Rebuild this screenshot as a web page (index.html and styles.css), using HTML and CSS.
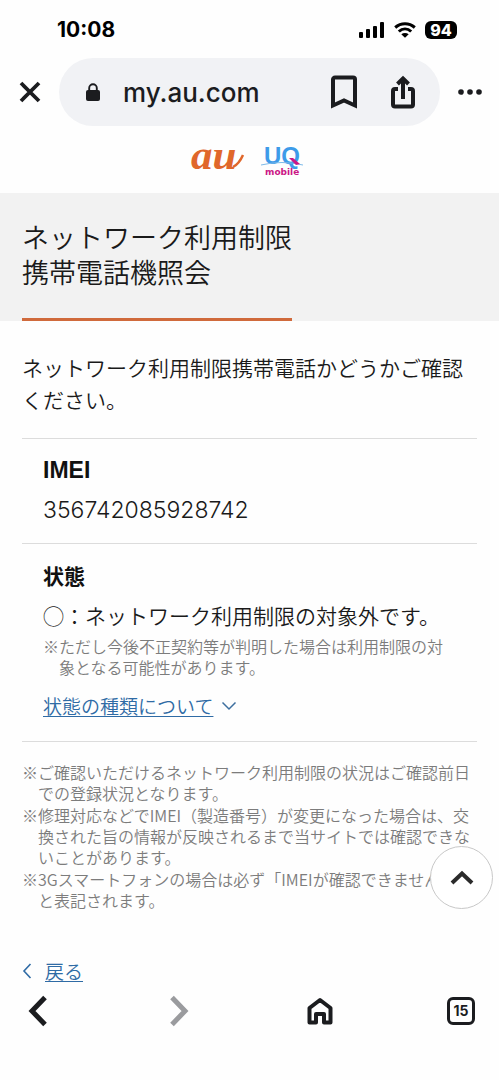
FILE: index.html
```html
<!DOCTYPE html>
<html lang="ja">
<head>
<meta charset="utf-8">
<meta name="viewport" content="width=device-width, initial-scale=1">
<title>ネットワーク利用制限携帯電話機照会</title>
<link rel="stylesheet" href="styles.css">
</head>
<body>
<div class="status-bar">
  <time class="clock">10:08</time>
  <div class="indicators">
    <svg class="signal" viewBox="0 0 26 16" width="26" height="16" aria-hidden="true">
      <rect x="0" y="10" width="4" height="6" rx="1"/><rect x="7" y="7" width="4" height="9" rx="1"/><rect x="14" y="4" width="4" height="12" rx="1"/><rect x="21" y="0" width="4" height="16" rx="1"/>
    </svg>
    <svg class="wifi" viewBox="0 0 22 16" width="22" height="16" aria-hidden="true">
      <path d="M1.200 5.500C7 0.400 15 0.400 20.800 5.500M4.800 9.500C8.500 6 13.500 6 17.200 9.500" fill="none" stroke="#000" stroke-width="3"/>
      <path d="M11 15.800L7.300 12.300C9.500 10.500 12.500 10.500 14.700 12.300Z"/>
    </svg>
    <span class="battery">94</span>
  </div>
</div>
<header class="browser-bar">
  <button class="icon-button" type="button" aria-label="閉じる">
    <svg viewBox="0 0 22 22" width="22" height="22"><path d="M2 2L20 20M20 2L2 20" fill="none" stroke="#1b1c1f" stroke-width="3.800"/></svg>
  </button>
  <div class="omnibox">
    <svg viewBox="0 0 16 18" width="16" height="18" aria-hidden="true">
      <rect x="1" y="7" width="14" height="11" rx="2" fill="#1b1c1f"/><path d="M4.200 8V5a3.800 3.800 0 0 1 7.600 0v3" fill="none" stroke="#1b1c1f" stroke-width="1.900"/>
    </svg>
    <input class="address" type="text" value="my.au.com" aria-label="アドレス">
    <button class="omnibox-button" type="button" aria-label="ブックマーク">
      <svg viewBox="0 0 28 34" width="28" height="34"><path d="M3 30.500V4.500a2 2 0 0 1 2-2h18a2 2 0 0 1 2 2v26L14 25.500Z" fill="none" stroke="#1b1c1f" stroke-width="4"/></svg>
    </button>
    <button class="omnibox-button" type="button" aria-label="共有">
      <svg viewBox="0 0 26 34" width="26" height="34" fill="none" stroke="#1b1c1f" stroke-width="4"><path d="M8 14H5a2 2 0 0 0-2 2v13.500a2 2 0 0 0 2 2h16a2 2 0 0 0 2-2V16a2 2 0 0 0-2-2H18M13 24V4M7.500 9L13 3.500L18.500 9"/></svg>
    </button>
  </div>
  <button class="icon-button" type="button" aria-label="メニュー">
    <svg viewBox="0 0 24 6" width="24" height="6" fill="#1b1c1f"><circle cx="3" cy="3" r="2.800"/><circle cx="12" cy="3" r="2.800"/><circle cx="21" cy="3" r="2.800"/></svg>
  </button>
</header>
<main class="page">
  <div class="brands">
    <svg viewBox="0 0 56 56" width="56" height="56" role="img" aria-label="au">
      <text class="logo-au" x="1" y="37">au</text>
      <path d="M43 35Q49 32 53 23" fill="none" stroke="#e0672b" stroke-width="2.500"/>
    </svg>
    <svg viewBox="0 0 44 56" width="44" height="56" role="img" aria-label="UQ mobile">
      <text class="logo-uq" x="4" y="32">UQ</text>
      <path d="M1 33Q22 28 43 33" fill="none" stroke="#7fbbe9" stroke-width="1"/>
      <path d="M29 26L33 26L40 32L36 33Z" fill="#cb1886"/>
      <text class="logo-mobile" x="5" y="43">mobile</text>
    </svg>
  </div>
  <div class="title-band">
    <h1 class="title">ネットワーク利用制限<br>携帯電話機照会</h1>
  </div>
  <div class="content">
    <p class="lead">ネットワーク利用制限携帯電話かどうかご確認ください。</p>
    <dl class="result">
      <div class="result-row">
        <dt class="imei-label">IMEI</dt>
        <dd class="imei">356742085928742</dd>
      </div>
      <div class="result-row">
        <dt>状態</dt>
        <dd>◯：ネットワーク利用制限の対象外です。</dd>
        <dd class="note">※ただし今後不正契約等が判明した場合は利用制限の対象となる可能性があります。</dd>
        <dd class="more"><a class="link" href="#types">状態の種類について</a>
          <svg viewBox="0 0 16 10" width="16" height="10" aria-hidden="true"><path d="M1.500 1.500L8 8L14.500 1.500" fill="none" stroke="#3d6f9f" stroke-width="1.500"/></svg>
        </dd>
      </div>
    </dl>
    <ul class="notes">
      <li class="note">※ご確認いただけるネットワーク利用制限の状況はご確認前日での登録状況となります。</li>
      <li class="note">※修理対応などでIMEI（製造番号）が変更になった場合は、交換された旨の情報が反映されるまで当サイトでは確認できないことがあります。</li>
      <li class="note">※3Gスマートフォンの場合は必ず「IMEIが確認できません」と表記されます。</li>
    </ul>
    <div class="back">
      <svg viewBox="0 0 10 16" width="10" height="16" aria-hidden="true"><path d="M8.500 1L2 8L8.500 15" fill="none" stroke="#2f6ba5" stroke-width="1.600"/></svg>
      <a class="link" href="#back">戻る</a>
    </div>
  </div>
  <button class="to-top" type="button" aria-label="ページの先頭へ">
    <svg viewBox="0 0 24 16" width="24" height="16"><path d="M2 13L12 3.500L22 13" fill="none" stroke="#2b2b2b" stroke-width="4"/></svg>
  </button>
</main>
<nav class="toolbar">
  <button class="tool" type="button" aria-label="前のページ">
    <svg viewBox="0 0 20 32" width="20" height="32"><path d="M17 2.500L4 16L17 29.500" fill="none" stroke="#1b1c1f" stroke-width="5"/></svg>
  </button>
  <button class="tool" type="button" aria-label="次のページ">
    <svg viewBox="0 0 20 32" width="20" height="32"><path d="M3 2.500L16 16L3 29.500" fill="none" stroke="#9a9b9e" stroke-width="5"/></svg>
  </button>
  <button class="tool" type="button" aria-label="ホーム">
    <svg viewBox="0 0 26 28" width="26" height="28"><path d="M2.500 11L13 3L23.500 11V25.500H17V17H9V25.500H2.500Z" fill="none" stroke="#1b1c1f" stroke-width="4" stroke-linejoin="round"/></svg>
  </button>
  <button class="tool" type="button" aria-label="タブ 15">
    <span class="tab-count">15</span>
  </button>
</nav>
</body>
</html>
```
FILE: styles.css
```css
* { box-sizing: border-box; }

body {
  margin: 0;
  min-height: 100vh;
  display: flex;
  flex-direction: column;
  background: #fefefe;
  color: #1a1a1a;
  font-family: "Noto Sans CJK JP", sans-serif;
  font-size: 21px;
  font-weight: 350;
  line-height: 32px;
}

button {
  display: flex;
  align-items: center;
  justify-content: center;
  padding: 0;
  border: 0;
  background: none;
}

svg { display: block; flex: none; }

.status-bar {
  display: flex;
  justify-content: space-between;
  align-items: center;
  padding: 14px 42px 12px 57px;
  color: #000;
  font-family: Inter, sans-serif;
}

.clock { font-size: 21px; font-weight: 700; }

.indicators { display: flex; align-items: center; gap: 9px; }

.battery {
  width: 32px;
  border-radius: 6px;
  background: #000;
  color: #fff;
  font-size: 16px;
  font-weight: 800;
  line-height: 18px;
  text-align: center;
}

.browser-bar { display: flex; align-items: center; }

.icon-button { width: 59px; height: 68px; }

.omnibox {
  flex: 1;
  min-width: 0;
  display: flex;
  align-items: center;
  height: 68px;
  padding: 0 24px 0 26px;
  border-radius: 34px;
  background: #f1f2f5;
}

.address {
  flex: 1;
  min-width: 0;
  padding: 0 0 0 22px;
  border: 0;
  background: none;
  color: #1b1c1f;
  font-family: Inter, sans-serif;
  font-size: 26px;
  font-weight: 500;
}

.omnibox-button + .omnibox-button { margin-left: 32px; }

.page { position: relative; flex: 1; }

.brands {
  display: flex;
  justify-content: center;
  gap: 14px;
  padding: 6px 6px 5px 0;
}

.logo-au {
  fill: #e0672b;
  font-family: "Liberation Serif", serif;
  font-size: 43px;
  font-style: italic;
  font-weight: 700;
}

.logo-uq {
  fill: #3d9be9;
  font-family: "Liberation Sans", sans-serif;
  font-size: 24px;
  font-weight: 700;
}

.logo-mobile {
  fill: #cb1886;
  font-family: "DejaVu Sans", sans-serif;
  font-size: 9px;
  font-weight: 700;
}

.title-band { padding: 26px 22px 0; background: #f2f2f2; }

.title {
  width: fit-content;
  margin: 0;
  padding-bottom: 29px;
  border-bottom: 3px solid #d06a3c;
  font-size: 27px;
  font-weight: 350;
  line-height: 35px;
}

.content { padding: 30px 22px 0; }

.lead { margin: 0 0 23px; }

.result { margin: 0; border-bottom: 1px solid #dcdcdc; }

.result-row { padding: 15px 21px 17px; border-top: 1px solid #dcdcdc; }

dt { margin-bottom: 8px; color: #111; font-weight: 700; }

dd { margin: 0; }

.imei-label { font-family: "Liberation Sans", sans-serif; font-size: 23px; }

.imei { font-family: Inter, sans-serif; font-size: 23px; }

.note {
  padding-left: 16px;
  color: #7c7c7c;
  font-size: 16px;
  line-height: 21px;
  text-indent: -16px;
}

dd.note { margin: 5px 0 12px; }

.more { display: flex; align-items: center; gap: 8px; margin-bottom: 2px; }

.link {
  color: #2f6ba5;
  font-size: 19px;
  text-decoration: underline;
  text-decoration-thickness: 1px;
  text-underline-offset: 2px;
}

.notes {
  display: flex;
  flex-direction: column;
  gap: 1px;
  margin: 0;
  padding: 20px 7px 0 0;
  list-style: none;
}

.back {
  display: flex;
  align-items: center;
  gap: 13px;
  padding-top: 50px;
  line-height: 20px;
}

.to-top {
  position: absolute;
  right: 6px;
  bottom: 73px;
  width: 63px;
  height: 63px;
  border: 1px solid #c8c8c8;
  border-radius: 50%;
  background: #fff;
}

.toolbar {
  display: flex;
  justify-content: space-between;
  height: 98px;
  padding: 9px 8px 0;
}

.tool { width: 60px; height: 40px; }

.tab-count {
  width: 28px;
  border: 3px solid #1b1c1f;
  border-radius: 6px;
  color: #1b1c1f;
  font-family: Inter, sans-serif;
  font-size: 14px;
  font-weight: 700;
  line-height: 22px;
}
```
